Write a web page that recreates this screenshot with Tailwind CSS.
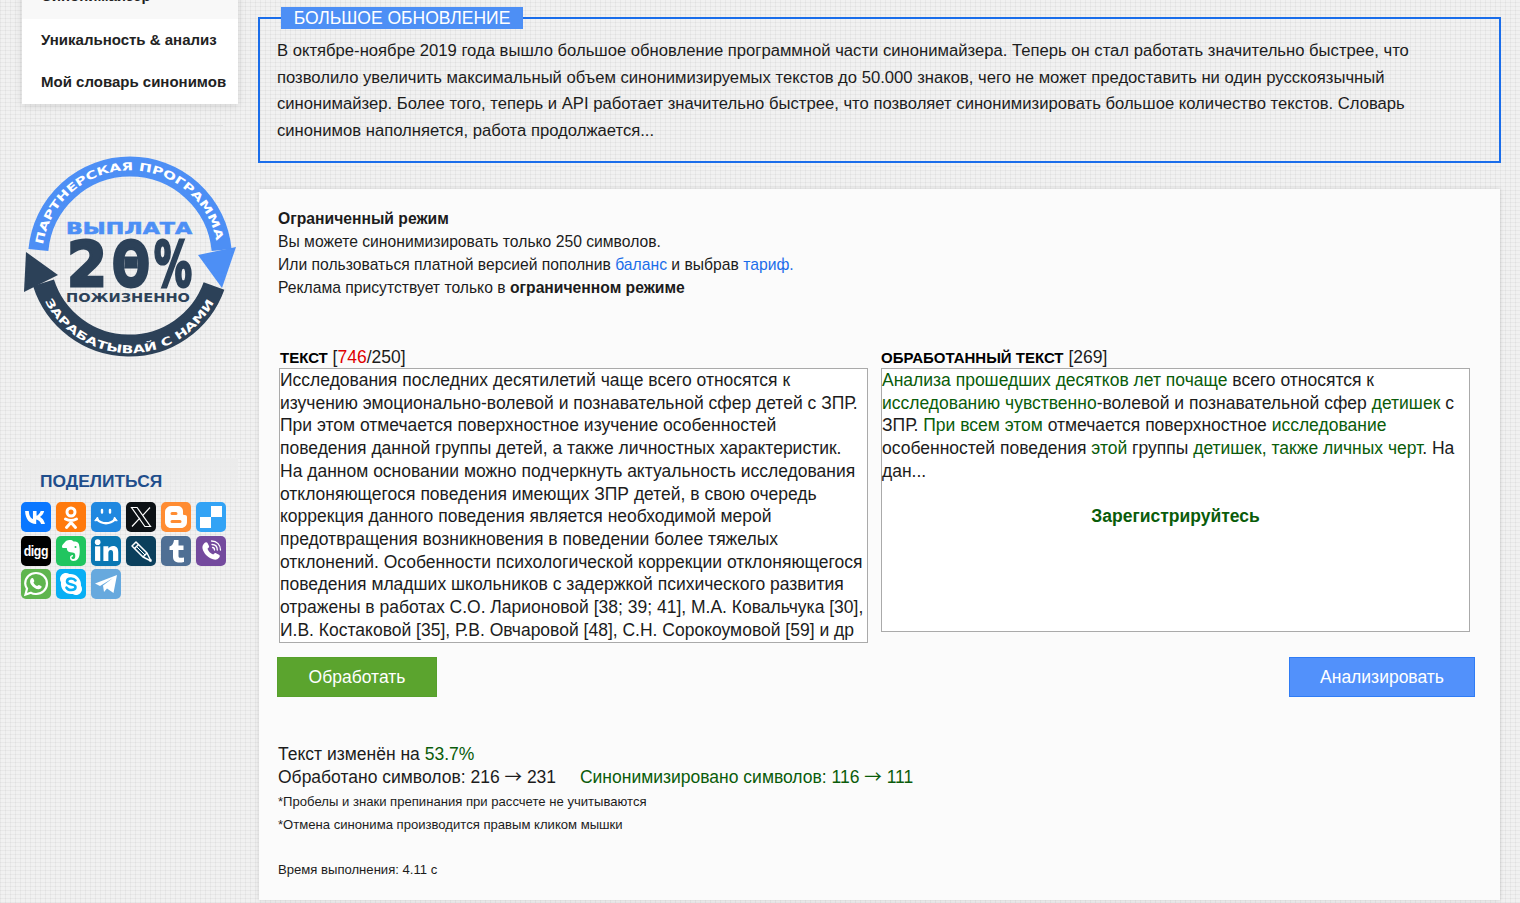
<!DOCTYPE html>
<html lang="ru">
<head>
  <meta charset="UTF-8" />
  <title>Синонимайзер</title>
  <script src="https://cdn.jsdelivr.net/npm/@tailwindcss/browser@4"></script>
</head>
<body class="h-screen overflow-hidden bg-[#f1f1f1] bg-[repeating-linear-gradient(0deg,#0000000a_0px,#0000000a_1px,transparent_1px,transparent_4px),repeating-linear-gradient(90deg,#0000000a_0px,#0000000a_1px,transparent_1px,transparent_5px)] font-['Liberation_Sans',Arial,sans-serif] text-[#1c1c1c]">
  <div class="flex items-start">

    <!-- Sidebar -->
    <aside class="ml-[22px] w-[216px] shrink-0">
      <nav class="-mt-[20px] h-[124px] bg-white shadow-[0_2px_8px_rgba(0,0,0,0.12)] text-[15px] font-bold text-[#222]">
        <div class="h-[39px] bg-[#f8f8f8] pl-[19px] pt-[8px] leading-[16px]">Синонимайзер</div>
        <div class="h-[43px] pl-[19px] pt-[13px] leading-[16px]">Уникальность &amp; анализ</div>
        <div class="h-[42px] pl-[19px] pt-[12px] leading-[16px] whitespace-nowrap">Мой словарь синонимов</div>
      </nav>
      <div class="mt-[21px] h-px w-[203px] -ml-[2px] bg-[#e2e2e2]"></div>

      <!-- Partner badge -->
      <svg class="-ml-[22px] mt-[14px] block" width="250" height="230" viewBox="0 0 250 230">
        <defs>
          <path id="arcTop" d="M 43 104.800 A 88 88 0 0 1 216.200 100.800" />
          <path id="arcBottom" d="M 45 161 A 95 95 0 0 0 214 162" />
        </defs>
        <path d="M 38.400 110 A 92 92 0 0 1 221.600 110" fill="none" stroke="#4d8ff5" stroke-width="20" />
        <path d="M 198 115 L 236 107 L 222 148 Z" fill="#4d8ff5" />
        <path d="M 214 146 A 90 90 0 0 1 43.500 142.800" fill="none" stroke="#2c4158" stroke-width="22" />
        <path d="M 26 112 L 24 152 L 58 135 Z" fill="#2c4158" />
        <text fill="#fff" font-family="DejaVu Sans" font-weight="700" font-size="11">
          <textPath href="#arcTop" textLength="245" lengthAdjust="spacingAndGlyphs">ПАРТНЕРСКАЯ ПРОГРАММА</textPath>
        </text>
        <text fill="#fff" font-family="DejaVu Sans" font-weight="700" font-size="11">
          <textPath href="#arcBottom" textLength="208" lengthAdjust="spacingAndGlyphs">ЗАРАБАТЫВАЙ С НАМИ</textPath>
        </text>
        <text x="66" y="94" textLength="126" lengthAdjust="spacingAndGlyphs" fill="#4d8ff5" stroke="#4d8ff5" stroke-width="0.600" font-family="DejaVu Sans" font-weight="700" font-size="16.400">ВЫПЛАТА</text>
        <g fill="#2c4158" stroke="#2c4158" stroke-width="3" font-family="DejaVu Sans" font-weight="700" font-size="62">
          <text x="67" y="146" textLength="40" lengthAdjust="spacingAndGlyphs">2</text>
          <text x="112" y="146" textLength="38" lengthAdjust="spacingAndGlyphs">Θ</text>
          <text x="154" y="146" textLength="38" lengthAdjust="spacingAndGlyphs">%</text>
        </g>
        <text x="66" y="162" textLength="124" lengthAdjust="spacingAndGlyphs" fill="#2c4158" font-family="DejaVu Sans" font-weight="700" font-size="12.300">ПОЖИЗНЕННО</text>
      </svg>

      <!-- Share -->
      <div class="mt-[88px] h-[45px] bg-linear-to-b from-[#ebebeb] to-transparent pl-[18px] pt-[12px] text-[17.400px] font-bold leading-[22px] text-[#1f4e8c]">ПОДЕЛИТЬСЯ</div>
      <div class="-ml-[1px] -mt-[1px] flex w-[210px] flex-wrap gap-x-[5px] gap-y-[3.500px]">
        <span class="flex size-[30px] items-center justify-center rounded-[5px] bg-[#0a77ff]">
          <svg width="24" height="15" viewBox="0 0 22 14" preserveAspectRatio="none"><path fill="#fff" d="M1 1h3.400c.2 5 2.300 7 3.800 7.400V1h3.300v4.300C13 5.100 14.600 3.200 15.300 1h3.200c-.5 2.700-2.500 4.700-3.900 5.500 1.400.7 3.700 2.400 4.600 6.500h-3.500c-.7-2.300-2.500-4-4.500-4.200V13h-.4C5.300 13 1.300 9 1 1z"/></svg>
        </span>
        <span class="flex size-[30px] items-center justify-center rounded-[5px] bg-[#ff7a0d]">
          <svg width="18" height="25" viewBox="0 0 18 24" fill="none" stroke="#fff" stroke-width="3" stroke-linecap="round"><circle cx="9" cy="6.500" r="4" /><path d="M3.500 13.500c3.500 2 7.500 2 11 0M9 15.500v2M9 17l-4.500 5M9 17l4.500 5" /></svg>
        </span>
        <span class="flex size-[30px] items-center justify-center rounded-[5px] bg-[#2088e0]">
          <svg width="24" height="18" viewBox="0 0 24 18" fill="none" stroke="#fff" stroke-width="2.400" stroke-linecap="round"><path d="M8 2v2.500M16 2v2.500M3 11.500c5 5 13 5 18 0" /><path d="M1 12.500l2.500-3.500 1 3zM23 12.500l-2.500-3.500-1 3z" fill="#fff" stroke-width="1" /></svg>
        </span>
        <span class="flex size-[30px] items-center justify-center rounded-[5px] bg-[#0c1115]">
          <svg width="24" height="24" viewBox="0 0 24 24" fill="none" stroke="#fff" stroke-width="1.200"><path d="M2.500 2.500h5.600l13.400 19h-5.600zM21 2.500L13.300 10.800M3 21.500l8-8.700" /></svg>
        </span>
        <span class="flex size-[30px] items-center justify-center rounded-[5px] bg-[#ff8c32]">
          <svg width="24" height="24" viewBox="0 0 24 24"><path fill="#fff" fill-rule="evenodd" d="M7 1h7c3 0 5 2.400 5 5v3c0 .8.600 1 1.500 1H21c1.200 0 2 .8 2 2v5c0 3.500-2.500 6-6 6H7c-3.300 0-6-2.700-6-6V7c0-3.300 2.700-6 6-6zm1 6a1.500 1.500 0 0 0 0 3h4a1.500 1.500 0 0 0 0-3zm0 8a1.500 1.500 0 0 0 0 3h8a1.500 1.500 0 0 0 0-3z"/></svg>
        </span>
        <span class="flex size-[30px] items-center justify-center rounded-[5px] bg-[#33a3f5]">
          <svg width="24" height="24" viewBox="0 0 24 24"><path fill="#fff" d="M12 1h11v11H12zM1 12h11v11H1z"/></svg>
        </span>
        <span class="flex size-[30px] items-center justify-center rounded-[5px] bg-black"><span class="scale-x-[0.82] text-[15px] leading-none font-bold tracking-[-0.5px] text-white">digg</span></span>
        <span class="flex size-[30px] items-center justify-center rounded-[5px] bg-[#21c55f]">
          <svg width="22" height="24" viewBox="0 0 22 24"><path fill="#fff" fill-rule="evenodd" d="M6 2c1-.8 3-1 4-1 2 0 3 .7 3.500 1.500 2.500 0 5 .5 5.500 3 .7 3 1 7 .5 10-.4 3.500-2 6.500-6 6.500-2.500 0-3.500-1.500-3.500-3.500 0-1.500 1.200-2.500 3-2.500v1.500c-1 0-1.500.3-1.500 1 0 1 .8 1.500 2 1.500 2 0 2-3 1.500-5-.3-1.500-2-1.500-4.500-1.800C7.500 13 7 11 6.800 9H4C2.500 9 2 8.500 2 8c0-1 .2-2 1-2.800z"/><circle cx="15.500" cy="8" r="1" fill="#21c55f"/></svg>
        </span>
        <span class="flex size-[30px] items-center justify-center rounded-[5px] bg-[#0a77b3]">
          <svg width="25" height="23" viewBox="0 0 24 22" fill="#fff"><rect x="1" y="7" width="5" height="14" /><circle cx="3.500" cy="3" r="2.700" /><path d="M9 7h4.800v2c1-1.500 2.500-2.400 4.500-2.400 3.700 0 5 2.400 5 6V21h-5v-7.500c0-1.800-.6-3-2.200-3-1.700 0-2.300 1.300-2.300 3V21H9z" /></svg>
        </span>
        <span class="flex size-[30px] items-center justify-center rounded-[5px] bg-[#0b3f5c]">
          <svg width="24" height="24" viewBox="0 0 24 24" fill="none" stroke="#fff" stroke-width="1.500" stroke-linejoin="round"><path d="M3 7L7 3 18 14 22 22 14 18Z" /><path d="M5.500 9.500L9.500 5.500M14 18L18 14" /><path d="M8 8L16 16" stroke-width="1" /><path d="M21 21l1 1" stroke-width="2.500" /></svg>
        </span>
        <span class="flex size-[30px] items-center justify-center rounded-[5px] bg-[#4f6f94]">
          <svg width="18" height="24" viewBox="0 0 18 24"><path fill="#fff" d="M7 1h4.500v5.500h5v4.500h-5v6c0 1.800 1.300 2.300 5.500 1.500V23c-6 1.500-11 .3-11-5v-7H2.500V7.500C5 7 6.500 4.500 7 1z"/></svg>
        </span>
        <span class="flex size-[30px] items-center justify-center rounded-[5px] bg-[#744a9e]">
          <svg width="26" height="26" viewBox="0 0 26 26" fill="none"><path fill="#fff" d="M6.500 5c1-1 2.500-1 3 0l1.500 3c.3.700 0 1.300-.5 1.800l-1 1c.8 2.500 3 4.800 5.700 5.800l1-1c.5-.5 1.200-.7 1.800-.4l3 1.500c1 .5 1 2 0 3-1.500 1.800-3.500 2.500-6 1.500C9.500 19.500 5.500 15 4.500 10.500 4 8.500 5 6.300 6.500 5z"/><path stroke="#fff" stroke-width="1.300" stroke-linecap="round" d="M13.500 3c5.500 0 9 4 9 9M14 6.500c3.500 0 5.300 2.500 5.300 5.500M14.500 9.500c1.500 0 2 1 2 2.500"/></svg>
        </span>
        <span class="flex size-[30px] items-center justify-center rounded-[5px] bg-[#5fb54e]">
          <svg width="26" height="26" viewBox="0 0 26 26" fill="none"><path stroke="#fff" stroke-width="2.200" d="M2.500 23.500l1.500-5.800C2.800 15.800 2.200 14 2.200 12.500 2.200 6.500 7 2 13 2s11 4.500 11 10.500S19 23 13 23c-1.800 0-3.800-.4-5-1.200z"/><path fill="#fff" d="M9.500 7c.8 0 1.500 2 1.800 3 0 .8-1 1.300-.8 1.800.8 1.500 2 2.600 3.600 3.300.6 0 1.200-1.100 1.800-1 .8.200 2.400 1 2.700 1.500.2 1-.8 2.500-2.800 2.700-2.600.2-6-1.900-7.900-5-1.400-2.400-1-5.800 1.600-6.300z"/></svg>
        </span>
        <span class="flex size-[30px] items-center justify-center rounded-[5px] bg-[#08aff4]">
          <svg width="24" height="24" viewBox="0 0 24 24"><path fill="#fff" fill-rule="evenodd" d="M7 1c1.300 0 2.400.4 3.300 1.100C15.800 1.300 22.700 6 22 13.800c.7 1 1 2.100 1 3.200 0 3.300-2.700 6-6 6-1.200 0-2.300-.3-3.200-1C7 23 1.200 17.500 2 10.300 1.400 9.300 1 8.200 1 7c0-3.300 2.700-6 6-6z"/><path fill="none" stroke="#08aff4" stroke-width="2.600" stroke-linecap="round" d="M16.500 8.500C15.500 7 14 6.500 12 6.500c-2.200 0-4 1.100-4 3 0 4 8.500 2 8.500 5.500 0 2-2 3-4.500 3-2 0-3.500-.7-4.500-2.300"/></svg>
        </span>
        <span class="flex size-[30px] items-center justify-center rounded-[5px] bg-[#67a9de]">
          <svg width="24" height="22" viewBox="0 0 24 22"><path fill="#fff" d="M1 10.500L23 2l-3.500 18-6.500-4.500-3 3.500-1-6.500L19 5 6 13z"/></svg>
        </span>
      </div>
    </aside>

    <!-- Main column -->
    <main class="ml-[20px] w-[1243px] shrink-0">
      <section class="relative mt-[17px] h-[146px] border-2 border-[#1a6dea] pl-[17px] pt-[19px] pr-[70px] text-[16.650px] leading-[26.600px]">
        <div class="absolute -top-[12px] left-[21px] flex h-[22px] w-[242px] items-center justify-center bg-[#4d8ff5] text-[17.500px] text-white">БОЛЬШОЕ ОБНОВЛЕНИЕ</div>
        В октябре-ноябре 2019 года вышло большое обновление программной части синонимайзера. Теперь он стал работать значительно быстрее, что позволило увеличить максимальный объем синонимизируемых текстов до 50.000 знаков, чего не может предоставить ни один русскоязычный синонимайзер. Более того, теперь и API работает значительно быстрее, что позволяет синонимизировать большое количество текстов. Словарь синонимов наполняется, работа продолжается...
      </section>

      <section class="ml-[1px] mt-[26px] h-[711px] w-[1241px] bg-[#fbfbfb] pl-[19px] pt-[18px] pr-[25px] shadow-[0_0_4px_rgba(0,0,0,0.15)]">
        <div class="text-[15.700px] leading-[23px]">
          <p><b>Ограниченный режим</b></p>
          <p>Вы можете синонимизировать только 250 символов.</p>
          <p>Или пользоваться платной версией пополнив <a class="text-[#1a6dea]">баланс</a> и выбрав <a class="text-[#1a6dea]">тариф.</a></p>
          <p>Реклама присутствует только в <b>ограниченном режиме</b></p>
        </div>

        <div class="mt-[47px] flex pl-[1px]">
          <div class="w-[589px] shrink-0">
            <div class="h-[22px] pl-[1px] text-[17.500px] leading-[22px] whitespace-nowrap"><b class="text-[15px] text-black">ТЕКСТ</b> [<span class="text-[#e00000]">746</span>/250]</div>
            <div class="h-[275px] overflow-hidden border border-[#aaa] bg-white text-[17.500px] leading-[22.700px]">Исследования последних десятилетий чаще всего относятся к изучению эмоционально-волевой и познавательной сфер детей с ЗПР. При этом отмечается поверхностное изучение особенностей поведения данной группы детей, а также личностных характеристик. На данном основании можно подчеркнуть актуальность исследования отклоняющегося поведения имеющих ЗПР детей, в свою очередь коррекция данного поведения является необходимой мерой предотвращения возникновения в поведении более тяжелых отклонений. Особенности психологической коррекции отклоняющегося поведения младших школьников с задержкой психического развития отражены в работах С.О. Ларионовой [38; 39; 41], М.А. Ковальчука [30], И.В. Костаковой [35], Р.В. Овчаровой [48], С.Н. Сорокоумовой [59] и др</div>
          </div>
          <div class="ml-[13px] w-[589px] shrink-0">
            <div class="h-[22px] text-[17.500px] leading-[22px] whitespace-nowrap"><b class="text-[15px] text-black">ОБРАБОТАННЫЙ ТЕКСТ</b> [269]</div>
            <div class="h-[264px] border border-[#aaa] bg-white text-[17.500px] leading-[22.700px]">
              <span class="text-[#0a5c0a]">Анализа прошедших десятков лет почаще</span> всего относятся к <span class="text-[#0a5c0a]">исследованию чувственно</span>-волевой и познавательной сфер <span class="text-[#0a5c0a]">детишек</span> с ЗПР. <span class="text-[#0a5c0a]">При всем этом</span> отмечается поверхностное <span class="text-[#0a5c0a]">исследование</span> особенностей поведения <span class="text-[#0a5c0a]">этой</span> группы <span class="text-[#0a5c0a]">детишек, также личных черт</span>. На дан...
              <p class="mt-[22px] text-center font-bold text-[#0a5c0a]">Зарегистрируйтесь</p>
            </div>
          </div>
        </div>

        <div class="-ml-[1px] mt-[14px] flex justify-between">
          <button class="h-[40px] w-[160px] border border-[#56a02c] bg-[#5ba42e] text-[17.500px] text-white">Обработать</button>
          <button class="h-[40px] w-[186px] border border-[#2f7cf5] bg-[#5291fb] text-[17.500px] text-white">Анализировать</button>
        </div>

        <div class="mt-[46px] text-[17.500px] leading-[23px]">
          <p>Текст изменён на <span class="text-[#0a5c0a]">53.7%</span></p>
          <p>Обработано символов: 216 <span class="font-['Noto_Sans_CJK_SC'] leading-none">→</span> 231 <span class="ml-[19px] text-[#0a5c0a]">Синонимизировано символов: 116 <span class="font-['Noto_Sans_CJK_SC'] leading-none">→</span> 111</span></p>
        </div>
        <div class="mt-[1px] text-[13.100px] leading-[23px]">
          <p>*Пробелы и знаки препинания при рассчете не учитываются</p>
          <p>*Отмена синонима производится правым кликом мышки</p>
          <p class="mt-[22px]">Время выполнения: 4.11 с</p>
        </div>
      </section>
    </main>
  </div>
</body>
</html>
